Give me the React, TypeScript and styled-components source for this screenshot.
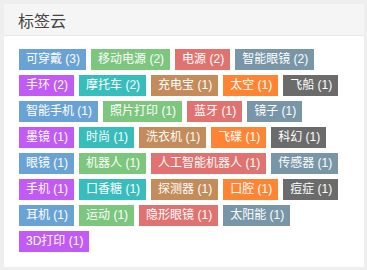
import React from 'react'
import styled, { createGlobalStyle } from 'styled-components';

const GlobalStyle = createGlobalStyle`
    html, body {
        margin: 0;
        padding: 0;
        background: #eeeeee;
    }
    body {
        padding: 4px;
        font-family: "Liberation Sans", "Noto Sans CJK SC", sans-serif;
    }
`;

const colors = ['#69a3d5', '#7cc67d', '#e0736f', '#7896a8', '#c25af5', '#36bdbc', '#c38c5a', '#ff8534', '#6b6b6b'];

const tags: [string, number][] = [
    ['可穿戴', 3], ['移动电源', 2], ['电源', 2], ['智能眼镜', 2],
    ['手环', 2], ['摩托车', 2], ['充电宝', 1], ['太空', 1], ['飞船', 1],
    ['智能手机', 1], ['照片打印', 1], ['蓝牙', 1], ['镜子', 1],
    ['墨镜', 1], ['时尚', 1], ['洗衣机', 1], ['飞碟', 1], ['科幻', 1],
    ['眼镜', 1], ['机器人', 1], ['人工智能机器人', 1], ['传感器', 1],
    ['手机', 1], ['口香糖', 1], ['探测器', 1], ['口腔', 1], ['痘症', 1],
    ['耳机', 1], ['运动', 1], ['隐形眼镜', 1], ['太阳能', 1],
    ['3D打印', 1],
];

const App = () => {
    return (
        <>
            <GlobalStyle />
            <Panel>
                <Header>
                    <Title>标签云</Title>
                </Header>
                <Body>
                    {tags.map(([name, count], i) => (
                        <Tag key={name} $bg={colors[i % colors.length]}>{name} ({count})</Tag>
                    ))}
                </Body>
            </Panel>
        </>
    )
}

const Panel = styled.div`
    width: 360px;
    height: 263px;
    background: #ffffff;
    box-sizing: border-box;
`;

const Header = styled.div`
    height: 32px;
    background: #f5f5f5;
    border-bottom: 1px solid #e8e8e8;
    box-sizing: border-box;
    display: flex;
    align-items: center;
    padding-left: 14px;
`;

const Title = styled.h3`
    margin: 0;
    font-size: 16px;
    font-weight: normal;
    color: #444444;
    font-family: "Noto Sans CJK SC", sans-serif;
`;

const Body = styled.div`
    display: flex;
    flex-wrap: wrap;
    gap: 5px 5px;
    padding: 13px 15px 15px;
    align-content: flex-start;
`;

const Tag = styled.span<{ $bg: string }>`
    display: inline-block;
    height: 21px;
    line-height: 21px;
    padding: 0 6px 0 7px;
    font-size: 12px;
    color: #ffffff;
    background: ${p => p.$bg};
    white-space: nowrap;
`;

export default App
